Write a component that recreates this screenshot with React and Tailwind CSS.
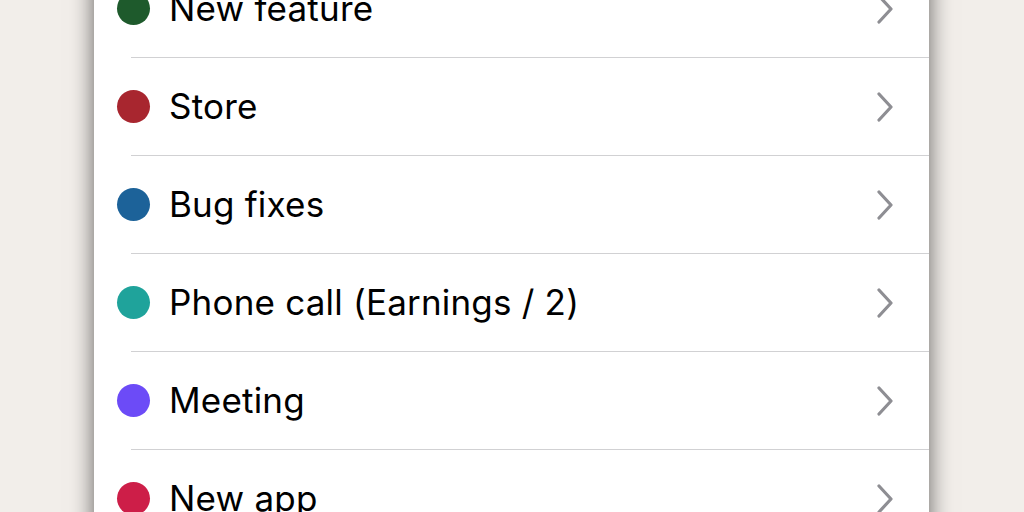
const items = [
  { name: 'New feature', dot: 'bg-[#1e5a2c]' },
  { name: 'Store', dot: 'bg-[#a8262f]' },
  { name: 'Bug fixes', dot: 'bg-[#1c6299]' },
  { name: 'Phone call (Earnings / 2)', dot: 'bg-[#1fa39b]' },
  { name: 'Meeting', dot: 'bg-[#6c4bf7]' },
  { name: 'New app', dot: 'bg-[#cd1e48]' },
];

function Chevron() {
  return (
    <svg width="20" height="30" viewBox="0 0 20 30" className="mr-[34px]">
      <path d="M4 2 L16 15 L4 28" fill="none" stroke="#8e8e93" strokeWidth="3.2" strokeLinecap="round" strokeLinejoin="round" />
    </svg>
  );
}

function Row({ name, dot, last }) {
  return (
    <div>
      <div className="flex h-[97px] items-center pl-[23px]">
        <span className={`h-[33px] w-[33px] shrink-0 rounded-full ${dot}`} />
        <span className="ml-[19px] flex-1 text-[35px] leading-none tracking-[0.2px] text-black">{name}</span>
        <Chevron />
      </div>
      {!last && <div className="ml-[37px] h-px bg-[#d1d1d3]" />}
    </div>
  );
}

export default function App() {
  return (
    <div
      className="h-[512px] w-[1024px] overflow-hidden bg-[#f2eeea]"
      style={{ fontFamily: 'Inter, "Noto Sans", sans-serif' }}
    >
      <div className="-mt-[40px] ml-[94px] w-[835px] bg-white shadow-[0_0_22px_rgba(0,0,0,0.6)]">
        {items.map((it, i) => (
          <Row key={it.name} {...it} last={i === items.length - 1} />
        ))}
      </div>
    </div>
  );
}
